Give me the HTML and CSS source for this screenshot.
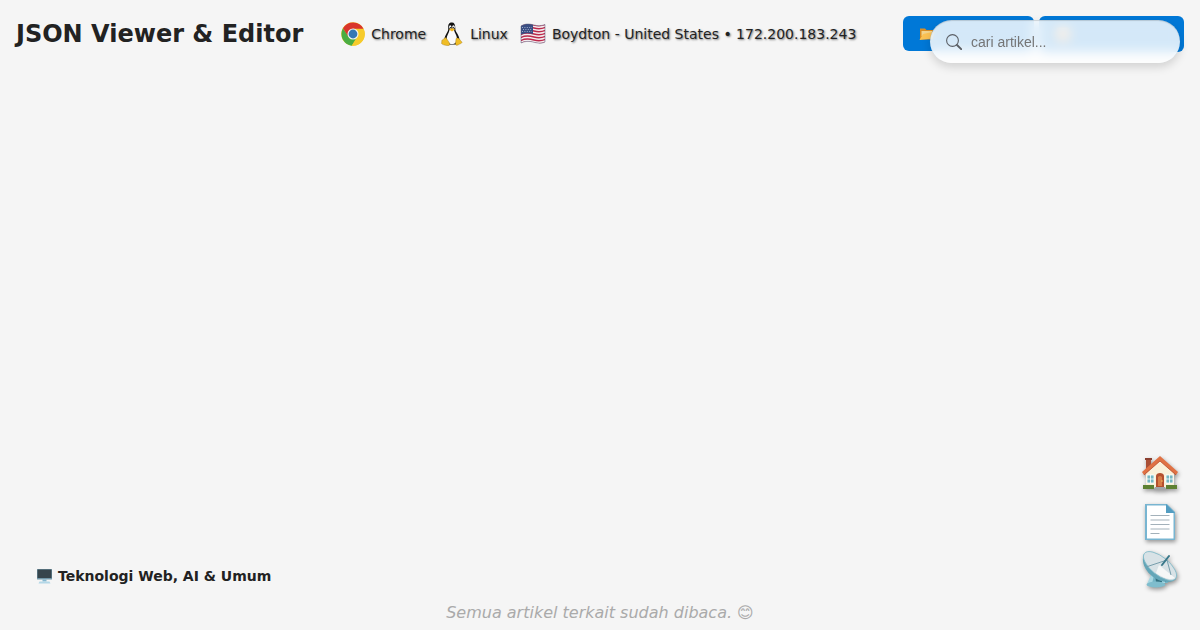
FILE: index.html
```html
<!DOCTYPE html>
<html lang="id">
<head>
<meta charset="utf-8">
<meta name="viewport" content="width=device-width, initial-scale=1">
<title>JSON Viewer &amp; Editor</title>
<link rel="stylesheet" href="styles.css">
</head>
<body>
<header class="topbar">
  <h1 class="title">JSON Viewer &amp; Editor</h1>
  <div class="visitor">
    <span class="visitor-item">
      <svg class="visitor-icon" viewBox="0 0 48 48" aria-hidden="true">
        <circle cx="24" cy="24" r="23.500" fill="#f6cb2b"/>
        <path d="M4 12.500A23.500 23.500 0 0 0 21.500 47.400L33 29 24 24 15 29Z" fill="#4bad42"/>
        <path d="M24 13.500H45A23.500 23.500 0 0 1 21.500 47.400L33 29Z" fill="#f6cb2b"/>
        <path d="M4 12.500 14.500 29 24 13.500H45A23.500 23.500 0 0 0 4 12.500Z" fill="#d9352c"/>
        <circle cx="24" cy="24" r="11" fill="#f4f4f4"/>
        <circle cx="24" cy="24" r="8.800" fill="#3577b4"/>
      </svg>
      Chrome
    </span>
    <span class="visitor-item">
      <svg class="visitor-icon" viewBox="0 0 48 48" aria-hidden="true">
        <path d="M24 1c-6 0-8 4-7.500 10 .4 6-1 8-4 13-3 5-5 11-3 15l8 6h14l7-6c1-6-1-11-4-16-3-4-4-7-4-12 0-6-2-10-6.500-10Z" fill="#111"/>
        <path d="M19 16c-1 6-6 11-6 19 0 5 5 9 11 9s11-4 10-11c-.5-7-5-11-6-17Z" fill="#fafafa"/>
        <ellipse cx="20.500" cy="10" rx="2.300" ry="3.300" fill="#fff"/>
        <ellipse cx="27" cy="10" rx="2.700" ry="3.500" fill="#fff"/>
        <circle cx="21" cy="11" r="1.200" fill="#111"/><circle cx="26.500" cy="11" r="1.300" fill="#111"/>
        <path d="m18 15 6-3 6 3-6 4Z" fill="#f5b820"/>
        <path d="M10 31c3 0 6 7 9 11 2 4-1 6-5 5-4-.5-7-1-10-3-2-1 0-3-.5-6-.5-3 4-2 6.500-7ZM32 34c0-3 5-2 7 0 1 3 5 5 5 7-1 2-5 3-8 5-3 1-5 1-5-3Z" fill="#f0bd25" stroke="#8a6510" stroke-width=".7"/>
      </svg>
      Linux
    </span>
    <span class="visitor-item visitor-place">
      <svg class="visitor-flag" viewBox="0 0 26 24" aria-hidden="true">
        <clipPath id="wave"><path d="M1 4c5-3 9-2 13-1 4 1 7 1 11-.5V20c-4 2-8 1-12 0s-8-1-12 1Z"/></clipPath>
        <g clip-path="url(#wave)">
          <path fill="#f3eef0" d="M0 0h26v24H0z"/>
          <path d="M0 4c5-3 10-2 14-1s8 1 12-1M0 7c5-3 10-2 14-1s8 1 12-1M0 10c5-3 10-2 14-1s8 1 12-1M0 13c5-3 10-2 14-1s8 1 12-1M0 16c5-3 10-2 14-1s8 1 12-1M0 19c5-3 10-2 14-1s8 1 12-1M0 22c5-3 10-2 14-1s8 1 12-1" fill="none" stroke="#bd294b" stroke-width="1.500"/>
          <path d="M0 0h13v12c-4-1-8-1-13 1Z" fill="#394e83"/>
          <path d="M2 5.500h10M3 7.500h9M2 9.500h10" stroke="#b7c2dc" stroke-width=".8" stroke-dasharray="1 1.400"/>
        </g>
        <path d="M1 4c5-3 9-2 13-1 4 1 7 1 11-.5V20c-4 2-8 1-12 0s-8-1-12 1Z" fill="none" stroke="#596080" stroke-width=".5"/>
      </svg>
      Boydton - United States • 172.200.183.243
    </span>
  </div>
  <div class="actions">
    <button class="action action-open" type="button" aria-label="Buka">
      <svg class="action-icon" viewBox="0 0 32 32" aria-hidden="true">
        <path d="M2 5h10l3 3h13v19H2Z" fill="#d98e25"/>
        <path d="M5 10h21v10H5Z" fill="#f3d48c"/>
        <path d="m1 28 7-12 24-5-5 14Z" fill="#fcc253"/>
      </svg>
    </button>
    <button class="action action-save" type="button" aria-label="Simpan">
      <svg class="action-icon" viewBox="0 0 32 32" aria-hidden="true">
        <rect x="3" y="3" width="26" height="26" rx="4" fill="#f5a04e"/>
        <path d="M9 4h14v8H9z" fill="#f6e3cf"/>
      </svg>
    </button>
  </div>
</header>

<label class="search">
  <svg class="search-icon" viewBox="0 0 16 16" aria-hidden="true">
    <circle cx="6.500" cy="6.500" r="5.900" fill="none" stroke="#5c6066" stroke-width="1.100"/>
    <path d="m11 11 4.200 4.200" stroke="#5c6066" stroke-width="1.900" stroke-linecap="round"/>
  </svg>
  <input class="search-input" type="search" placeholder="cari artikel..." aria-label="cari artikel">
</label>

<main class="content">
  <h2 class="category">
    <svg class="category-icon" viewBox="0 0 32 32" aria-hidden="true">
      <rect x="1" y="2" width="30" height="21" rx="1" fill="#7297a8"/>
      <path d="M2 3h28v17H2z" fill="#37454c"/>
      <path d="M12 23h8v4h-8z" fill="#83b6cf"/>
      <path d="M6 27h20l2 4H4Z" fill="#b4d7e7"/>
    </svg>
    Teknologi Web, AI &amp; Umum
  </h2>
</main>
<footer class="status">Semua artikel terkait sudah dibaca. 😊︎</footer>

<nav class="dock" aria-label="Navigasi">
  <a class="dock-link" href="#" aria-label="Beranda">
    <svg class="dock-icon" viewBox="0 0 36 36">
      <path d="M4 3h5v14H4z" fill="#a94f36"/><path d="M3 2h7v2H3z" fill="#8b4030"/>
      <path d="M4 17 18 4l14 13v16H4Z" fill="#faf0d9"/>
      <path d="M18 0 0 16l2 3L18 5l16 14 2-3Z" fill="#e07143"/>
      <path d="m2 19 16-14 16 14" fill="none" stroke="#b84a29" stroke-width=".8"/>
      <path d="M5 19h7v8H5zM24 19h7v8h-7z" fill="#76b7c1" stroke="#fff" stroke-width=".8"/>
      <path d="M8.500 19v8M5 23h7M27.500 19v8M24 23h7" stroke="#fff" stroke-width=".8"/>
      <path d="M14 32V20c0-4 8-4 8 0v12Z" fill="#b54f2d"/>
      <path d="M16 30v-9q2-2 4 0v9Z" fill="#d77b45"/><circle cx="20" cy="25" r=".7" fill="#ffd56b"/>
      <path d="M1 29h11v4H1zM24 29h11v4H24z" fill="#5d8132"/>
      <path d="M13 31h10l2 3H11Z" fill="#a2a4a6"/>
    </svg>
  </a>
  <a class="dock-link" href="#" aria-label="Artikel">
    <svg class="dock-icon" viewBox="0 0 36 36">
      <path d="M3 0h22l8 8v28H3Z" fill="#78b5d1"/>
      <path d="M5 1.500h19l7.500 7.500v25.500H5Z" fill="#fff"/>
      <path d="M24 0v9h9Z" fill="#539dc1"/>
      <path d="M8.500 11.500h19M8.500 16h19M8.500 20.500h19M8.500 25h19M8.500 29.500h9" stroke="#a3b1ba" stroke-width="1"/>
    </svg>
  </a>
  <a class="dock-link" href="#" aria-label="Siaran">
    <svg class="dock-icon" viewBox="0 0 36 36">
      <path d="m12 20-6 11h20l-3-9Z" fill="#73b4c5"/>
      <path d="M13 22h11v8H14Z" fill="#327080"/>
      <path d="M9 23h3l-2 9H5ZM20 25h3v6h-3z" fill="#a7d7e2"/>
      <ellipse cx="14" cy="32.500" rx="9.500" ry="3" fill="#7fbdcd"/>
      <path d="M2 2c-4 9 3 22 17 27 7 2 12 1 15-2Z" fill="#63a6b8"/>
      <ellipse cx="18" cy="14" rx="20" ry="9" transform="rotate(39 18 14)" fill="#d8e2e6" stroke="#80bac9" stroke-width=".8"/>
      <path d="M17 13 33 26c-5 3-13-1-19-5Z" fill="#f5f7f7"/>
      <path d="M4 15 25 8M25 8l4 15" stroke="#779eac" stroke-width="1" fill="none"/>
      <path d="m20 13 7-9" stroke="#39788a" stroke-width="2" stroke-linecap="round"/>
    </svg>
  </a>
</nav>
</body>
</html>
```
FILE: styles.css
```css
* { box-sizing: border-box; }

body {
  margin: 0;
  min-height: 100vh;
  display: flex;
  flex-direction: column;
  background: #f5f5f5;
  color: #222;
  font-family: "DejaVu Sans", sans-serif;
}

.topbar {
  display: flex;
  align-items: center;
  justify-content: space-between;
  padding: 16px;
}

.title {
  margin: 0;
  font-size: 24px;
  line-height: 36px;
}

.visitor {
  display: flex;
  align-items: center;
  gap: 14px;
  margin: 0 auto 0 38px;
  font-size: 14px;
  line-height: 24px;
  text-shadow: 1px 1px 2px rgba(0, 0, 0, 0.5);
}

.visitor-item {
  display: flex;
  align-items: center;
  gap: 6px;
}

.visitor-place { margin-left: -2px; }

.visitor-icon {
  width: 24px;
  height: 24px;
}

.visitor-flag {
  width: 26px;
  height: 24px;
}

.actions {
  display: flex;
  align-items: flex-start;
  gap: 5px;
}

.action {
  display: flex;
  align-items: center;
  padding: 0 16px;
  border: 0;
  border-radius: 6px;
  background: #0078d7;
}

.action-open {
  width: 131px;
  height: 35px;
}

.action-save {
  width: 145px;
  height: 36px;
}

.action-icon {
  width: 16px;
  height: 16px;
}

.search {
  position: fixed;
  top: 20px;
  right: 20px;
  display: flex;
  align-items: center;
  gap: 9px;
  width: 250px;
  height: 43px;
  padding: 0 16px;
  border-radius: 22px;
  background: rgba(255, 255, 255, 0.83);
  backdrop-filter: blur(6px);
  box-shadow: 0 4px 10px rgba(0, 0, 0, 0.15), inset 0 1px 1px rgba(0, 0, 0, 0.15);
}

.search-icon {
  flex: none;
  width: 16px;
  height: 16px;
}

.search-input {
  flex: 1;
  min-width: 0;
  padding: 0;
  border: 0;
  outline: 0;
  background: none;
  font: 14px "Liberation Sans", Arial, sans-serif;
}

.search-input::placeholder { color: #757575; }

.content {
  flex: 1;
  display: flex;
  flex-direction: column;
  justify-content: flex-end;
  padding: 0 36px;
}

.category {
  display: flex;
  align-items: center;
  gap: 5px;
  margin: 0 0 15px;
  font-size: 14px;
  line-height: 20px;
}

.category-icon {
  width: 17px;
  height: 16px;
}

.status {
  padding-bottom: 5px;
  color: #aaa;
  font-size: 16px;
  font-style: italic;
  line-height: 24px;
  text-align: center;
}

.dock {
  position: fixed;
  right: 22px;
  bottom: 42px;
  display: flex;
  flex-direction: column;
  gap: 12px;
}

.dock-link { display: block; }

.dock-icon {
  display: block;
  width: 36px;
  height: 36px;
  overflow: visible;
  filter: drop-shadow(1px 2px 2px rgba(0, 0, 0, 0.4));
}
```
